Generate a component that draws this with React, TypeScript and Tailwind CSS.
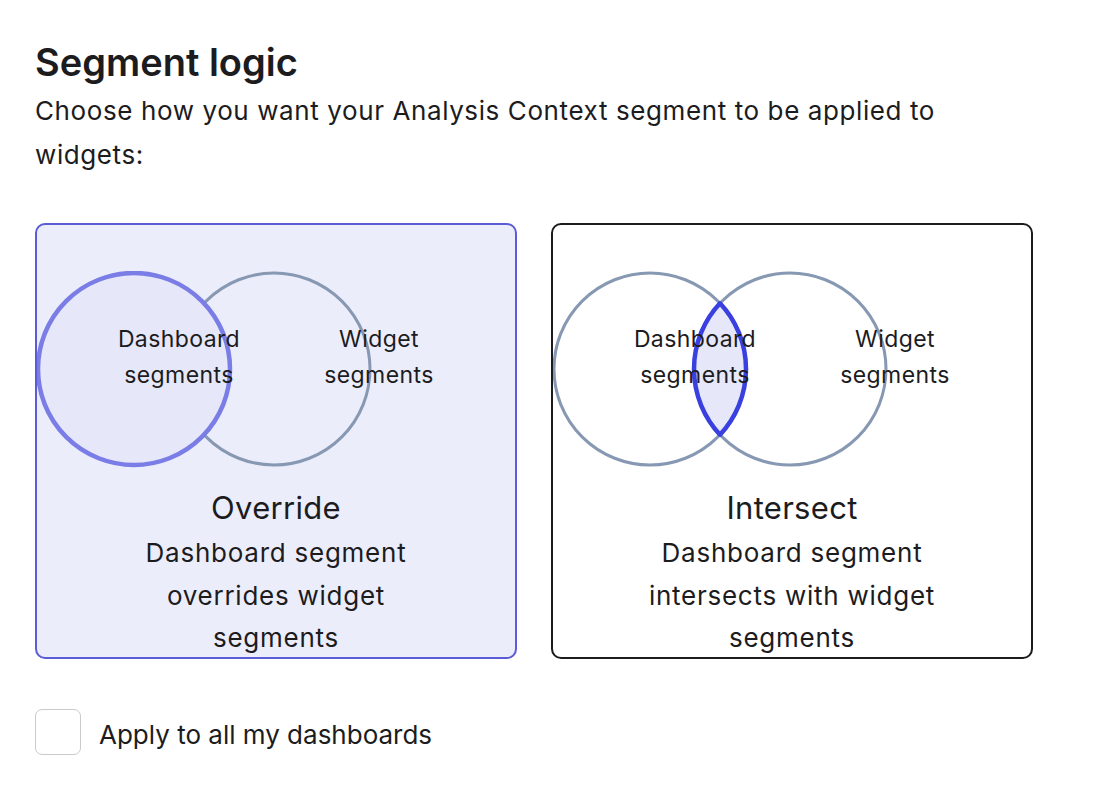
const SegmentCard = ({
  mode,
  title,
  description,
  selected,
}: {
  mode: "override" | "intersect";
  title: string;
  description: string;
  selected: boolean;
}) => {
  const left = 97;
  const right = 237;
  const cy = 98;
  const r = 96;
  const mid = (left + right) / 2;
  const h = Math.sqrt(r * r - (mid - left) * (mid - left));

  return (
    <div
      className={
        selected
          ? "flex h-[436px] w-[482px] flex-col items-center overflow-hidden rounded-[10px] border-2 border-[#5b5bd6] bg-[#ecedfb]"
          : "flex h-[436px] w-[482px] flex-col items-center overflow-hidden rounded-[10px] border-2 border-[#1c1c1e] bg-white"
      }
    >
      <svg width="478" height="200" viewBox="0 0 478 200" className="mt-[46px] shrink-0">
        {mode === "override" ? (
          <>
            <circle cx={right} cy={cy} r={r} fill="none" stroke="#8798b2" strokeWidth="3" />
            <circle cx={left} cy={cy} r={r} fill="#e6e7f8" stroke="#7a7de6" strokeWidth="4.5" />
          </>
        ) : (
          <>
            <circle cx={left} cy={cy} r={r} fill="none" stroke="#8798b2" strokeWidth="3" />
            <circle cx={right} cy={cy} r={r} fill="none" stroke="#8798b2" strokeWidth="3" />
            <path
              d={`M ${mid} ${cy - h} A ${r} ${r} 0 0 1 ${mid} ${cy + h} A ${r} ${r} 0 0 1 ${mid} ${cy - h} Z`}
              fill="#e6e7f8"
              stroke="#3a3fe0"
              strokeWidth="4.5"
              strokeLinejoin="round"
            />
          </>
        )}
        <g
          fontFamily="Inter, 'Noto Sans', sans-serif"
          fontSize="23"
          letterSpacing="0.4"
          fill="#1c1c1e"
          textAnchor="middle"
          dominantBaseline="middle"
        >
          <text x={142} y={70}>Dashboard</text>
          <text x={142} y={106}>segments</text>
          <text x={342} y={70}>Widget</text>
          <text x={342} y={106}>segments</text>
        </g>
      </svg>
      <div className="mt-[17px] text-[31px] leading-[40px] tracking-[0.3px] text-[#1c1c1e]">{title}</div>
      <p className="mt-[4px] w-[310px] text-center text-[26px] leading-[42.5px] tracking-[0.75px] text-[#1c1c1e]">
        {description}
      </p>
    </div>
  );
};

const App = () => {
  return (
    <div className="min-h-screen w-full bg-white pt-[40px] pl-[35px] font-['Inter',_'Noto_Sans',_sans-serif] text-[#1c1c1e]">
      <h1 className="text-[38px] leading-[44px] font-semibold">Segment logic</h1>
      <p className="mt-[5px] w-[940px] text-[26px] leading-[44px] tracking-[0.6px]">
        Choose how you want your Analysis Context segment to be applied to widgets:
      </p>

      <div className="mt-[46px] flex flex-row gap-[34px]">
        <SegmentCard
          mode="override"
          title="Override"
          description="Dashboard segment overrides widget segments"
          selected
        />
        <SegmentCard
          mode="intersect"
          title="Intersect"
          description="Dashboard segment intersects with widget segments"
          selected={false}
        />
      </div>

      <label className="mt-[50px] flex cursor-pointer flex-row items-center gap-[18px]">
        <span className="flex h-[46px] w-[46px] rounded-[7px] border-[1.5px] border-[#c9c9ce] bg-white" />
        <span className="mt-[6px] text-[26px] leading-[32px]">Apply to all my dashboards</span>
      </label>
    </div>
  );
};

export default App;
